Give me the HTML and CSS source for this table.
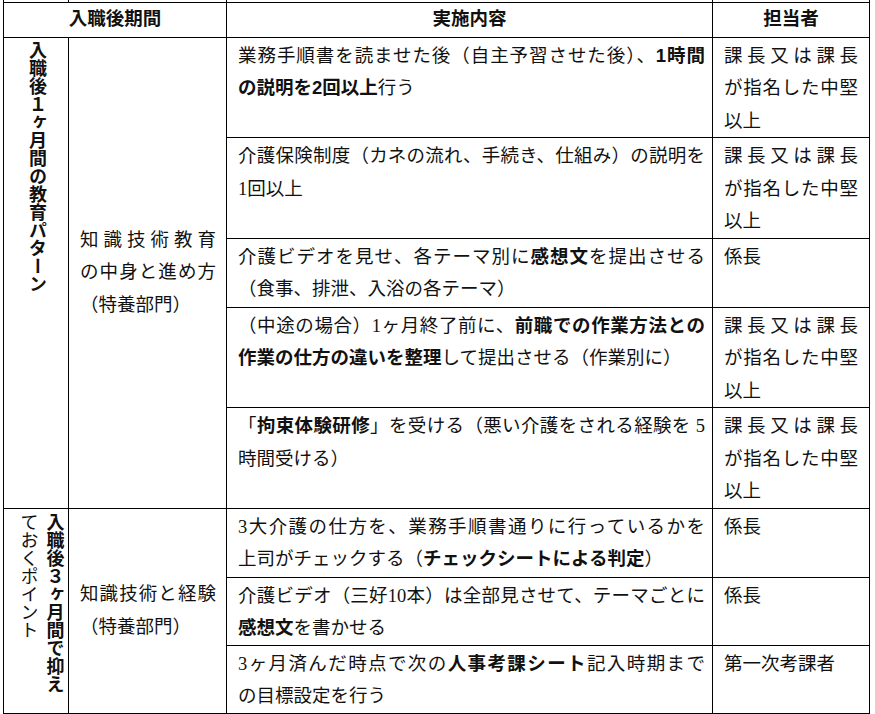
FILE: index.html
```html
<!DOCTYPE html>
<html lang="ja">
<head>
<meta charset="utf-8">
<title>入職後期間</title>
<link rel="stylesheet" href="styles.css">
</head>
<body>
<table class="plan">
  <colgroup>
    <col class="c1"><col class="c2"><col class="c3"><col class="c4">
  </colgroup>
  <tr class="cut"><td></td><td></td><td></td><td></td></tr>
  <tr class="head">
    <th colspan="2">入職後期間</th>
    <th>実施内容</th>
    <th>担当者</th>
  </tr>
  <tr>
    <td rowspan="5" class="period"><div class="vt"><b>入職後１ヶ月間の教育パターン</b></div></td>
    <td rowspan="5" class="cat"><span class="jl">知識技術教育</span><span class="jl">の中身と進め方</span><span class="ln">（特養部門）</span></td>
    <td class="task"><span class="jl">業務手順書を読ませた後（自主予習させた後）、<b>1時間</b></span><span class="ln"><b>の説明を2回以上</b>行う</span></td>
    <td class="who"><span class="jl">課長又は課長</span><span class="jl">が指名した中堅</span><span class="ln">以上</span></td>
  </tr>
  <tr>
    <td class="task"><span class="jl">介護保険制度（カネの流れ、手続き、仕組み）の説明を</span><span class="ln">1回以上</span></td>
    <td class="who"><span class="jl">課長又は課長</span><span class="jl">が指名した中堅</span><span class="ln">以上</span></td>
  </tr>
  <tr class="r70">
    <td class="task"><span class="jl">介護ビデオを見せ、各テーマ別に<b>感想文</b>を提出させる</span><span class="ln">（食事、排泄、入浴の各テーマ）</span></td>
    <td class="who"><span class="ln">係長</span></td>
  </tr>
  <tr>
    <td class="task"><span class="jl">（中途の場合）1ヶ月終了前に、<b>前職での作業方法との</b></span><span class="ln"><b>作業の仕方の違いを整理</b>して提出させる（作業別に）</span></td>
    <td class="who"><span class="jl">課長又は課長</span><span class="jl">が指名した中堅</span><span class="ln">以上</span></td>
  </tr>
  <tr>
    <td class="task"><span class="jl">「<b>拘束体験研修</b>」を受ける（悪い介護をされる経験を 5</span><span class="ln">時間受ける）</span></td>
    <td class="who"><span class="jl">課長又は課長</span><span class="jl">が指名した中堅</span><span class="ln">以上</span></td>
  </tr>
  <tr class="r70">
    <td rowspan="3" class="period period2"><div class="vt"><b>入職後３ヶ月間で抑え</b><br>ておくポイント</div></td>
    <td rowspan="3" class="cat"><span class="jl">知識技術と経験</span><span class="ln">（特養部門）</span></td>
    <td class="task"><span class="jl">3大介護の仕方を、業務手順書通りに行っているかを</span><span class="ln">上司がチェックする（<b>チェックシートによる判定</b>）</span></td>
    <td class="who"><span class="ln">係長</span></td>
  </tr>
  <tr>
    <td class="task"><span class="jl">介護ビデオ（三好10本）は全部見させて、テーマごとに</span><span class="ln"><b>感想文</b>を書かせる</span></td>
    <td class="who"><span class="ln">係長</span></td>
  </tr>
  <tr>
    <td class="task"><span class="jl">3ヶ月済んだ時点で次の<b>人事考課シート</b>記入時期まで</span><span class="ln">の目標設定を行う</span></td>
    <td class="who"><span class="ln">第一次考課者</span></td>
  </tr>
</table>
</body>
</html>
```

FILE: styles.css
```css
html, body {
  margin: 0;
  padding: 0;
  background: #fff;
}

body {
  font-family: "Liberation Serif", "Noto Sans CJK JP", serif;
  font-size: 18.5px;
  color: #111;
}

b {
  font-family: "Liberation Sans", "Noto Sans CJK JP", sans-serif;
  font-weight: 700;
}

.plan {
  border-collapse: collapse;
  table-layout: fixed;
  width: 866px;
  margin-left: 3px;
}

.c1 { width: 65px; }
.c2 { width: 158px; }
.c3 { width: 486px; }
.c4 { width: 157px; }

.plan td,
.plan th {
  border: 1px solid #000;
  padding: 2px 7px 0 11px;
  line-height: 32.5px;
  vertical-align: top;
  text-align: left;
  font-weight: 400;
}

.plan .cut td {
  height: 2px;
  padding: 0;
  border-top: none;
  line-height: 0;
  font-size: 0;
}

.plan .head th {
  text-align: center;
  font-family: "Liberation Sans", "Noto Sans CJK JP", sans-serif;
  font-weight: 700;
  padding: 0 0 1px;
}

.plan .r70 td {
  height: 66px;
}

.plan .period {
  padding: 3px 0 0;
}

.plan .period2 {
  padding: 4px 0 0 9px;
}

.vt {
  writing-mode: vertical-rl;
  font-size: 18px;
  line-height: 26px;
  width: fit-content;
  margin: 0 auto;
}

.plan .cat {
  vertical-align: middle;
  padding: 0 10px 0 11px;
}

.plan .who {
  padding: 2px 11px 0 11px;
}

.jl {
  display: block;
  white-space: nowrap;
  text-align: justify;
  text-align-last: justify;
}

.ln {
  display: block;
  white-space: nowrap;
}
```
